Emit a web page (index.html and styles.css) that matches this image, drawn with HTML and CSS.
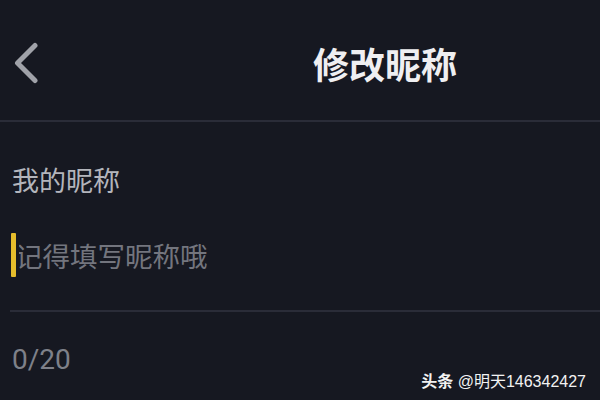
FILE: index.html
```html
<!DOCTYPE html>
<html lang="zh-CN">
<head>
<meta charset="utf-8">
<title>修改昵称</title>
<link rel="stylesheet" href="styles.css">
</head>
<body>
<div class="screen">
  <header class="nav">
    <svg class="back" width="24" height="42" viewBox="0 0 24 42" aria-hidden="true">
      <polyline points="21,3.5 3.5,21 21,38.5" fill="none" stroke="#a0a2a9" stroke-width="5" stroke-linecap="round" stroke-linejoin="round"/>
    </svg>
    <h1 class="title">修改昵称</h1>
  </header>
  <main class="content">
    <div class="label">我的昵称</div>
    <div class="input-row">
      <span class="cursor"></span>
      <span class="placeholder">记得填写昵称哦</span>
    </div>
  </main>
  <div class="divider"></div>
  <div class="counter">0/20</div>
  <div class="watermark"><b>头条</b> @明天146342427</div>
</div>
</body>
</html>
```

FILE: styles.css
```css
html, body {
  margin: 0;
  padding: 0;
  background: #161821;
}

.screen {
  position: relative;
  width: 600px;
  height: 400px;
  overflow: hidden;
  background: #161821;
  font-family: "Noto Sans CJK SC", "Noto Sans", sans-serif;
}

.nav {
  display: flex;
  align-items: center;
  box-sizing: border-box;
  height: 122px;
  padding: 5px 0 0 14px;
  border-bottom: 2px solid #2a2c38;
}

.back {
  display: block;
  flex: none;
}

.title {
  margin: 0 143px 0 auto;
  font-size: 36px;
  line-height: 36px;
  font-weight: 600;
  color: #efeff1;
  white-space: nowrap;
}

.content {
  padding-left: 12px;
}

.label {
  margin-top: 44px;
  font-size: 27px;
  line-height: 27px;
  color: #b3b5bc;
}

.input-row {
  position: relative;
  margin-top: 49px;
  height: 27px;
}

.placeholder {
  display: block;
  padding-left: 3px;
  font-size: 27.5px;
  line-height: 27px;
  color: #73757e;
}

.cursor {
  position: absolute;
  left: -1px;
  top: -9px;
  width: 5px;
  height: 44px;
  background: #e6bd2c;
  border-radius: 1px;
  box-shadow: 3px 0 0 #161821;
  z-index: 1;
}

.divider {
  margin: 41px 0 0 10px;
  height: 2px;
  background: #2a2c38;
}

.counter {
  margin: 34px 0 0 12px;
  font-family: Roboto, "Liberation Sans", sans-serif;
  font-size: 28px;
  line-height: 28px;
  color: #7e8089;
}

.watermark {
  position: absolute;
  top: 372px;
  right: 14px;
  font-family: "Liberation Sans", "Noto Sans CJK SC", sans-serif;
  font-size: 16px;
  line-height: 16px;
  color: #f2f2f2;
  white-space: nowrap;
}

.watermark b {
  font-family: "Noto Sans CJK SC", sans-serif;
  font-weight: 700;
}
```
